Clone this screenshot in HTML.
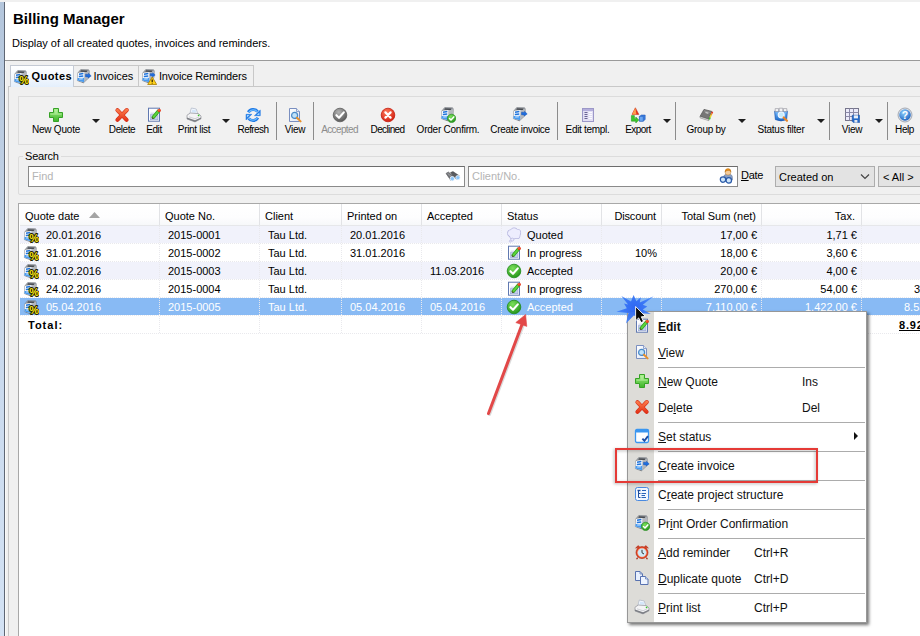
<!DOCTYPE html>
<html>
<head>
<meta charset="utf-8">
<title>Billing Manager</title>
<style>
*{box-sizing:border-box;margin:0;padding:0}
html,body{width:920px;height:636px;overflow:hidden;background:#f0f0f0}
body{position:relative;font-family:"Liberation Sans","DejaVu Sans",sans-serif;font-size:11px;color:#000}
.abs{position:absolute}
.t{position:absolute;white-space:nowrap;line-height:13px;font-size:11px}
.r{text-align:right}
#leftstrip{left:0;top:2px;width:4px;height:634px;background:linear-gradient(#b4c6dc,#c9d9ed 55%,#d3e2f4)}
#leftline{left:4px;top:2px;width:1px;height:634px;background:#5e6674}
#leftwhite{left:5px;top:61px;width:1px;height:575px;background:#fafaf8}
#header{left:5px;top:2px;width:915px;height:58px;background:#fff}
#hline{left:5px;top:60px;width:915px;height:1px;background:#9a9a9a}
#title{left:13px;top:10px;font-size:15px;font-weight:bold;line-height:17px}
#subtitle{left:12px;top:37px;letter-spacing:-.04px}
.tab{position:absolute;top:65px;height:21px;border:1px solid #c8c8c8;border-bottom:none;background:#f0f0f0}
.tab.sel{top:65px;height:22px;background:linear-gradient(#ffffff,#f3f8fe 50%,#e4effc);border-color:#c4cad4;z-index:2}
#pane{left:8px;top:86px;width:920px;height:560px;border:1px solid #c8c8c8;background:#f0f0f0}
#toolbar{left:18px;top:96px;width:920px;height:49px;border:1px solid #dcdcdc;background:#f1f1f1}
.tb{position:absolute;top:124px;font-size:10px;white-space:nowrap;transform:translateX(-50%);line-height:12px;color:#000}
.tb.dis{color:#8c8c8c;text-shadow:none}
.tsep{position:absolute;top:102px;width:1px;height:38px;background:#8c8c8c}
.darr{position:absolute;top:119px;width:0;height:0;border-left:4px solid transparent;border-right:4px solid transparent;border-top:4px solid #1e1e1e}
#sgroup{left:18px;top:156px;width:920px;height:39px;border:1px solid #dcdcdc;border-radius:2px}
.inp{position:absolute;top:166px;height:21px;background:#fff;border:1px solid #8a8a8a;border-top-color:#6c6c6c}
.ph{color:#b4b4b4}
#grid{left:18px;top:203px;width:920px;height:440px;background:#fff;border:1px solid #a8a8a8}
#ghead{left:20px;top:204px;width:900px;height:22px;background:linear-gradient(#ffffff,#fdfdfe 60%,#f6f7f9)}
.hsep{position:absolute;top:204px;width:1px;height:22px;background:#e2e3e6}
.row{position:absolute;left:20px;width:900px;height:18px}
.alt{background:#f1f2fb}
.selrow{background:#88baf4}
.vdot{position:absolute;top:226px;width:1px;height:108px;background-image:linear-gradient(#e9e9ed 50%,transparent 50%);background-size:1px 2px}
.hdot{position:absolute;left:20px;width:900px;height:1px;background-color:#fff;background-image:linear-gradient(90deg,#e9e9ed 50%,transparent 50%);background-size:2px 1px}
.w{color:#fff}
#menu{left:627px;top:311px;width:240px;height:312px;background:#fff;border:1px solid #979797;box-shadow:2px 2px 3px rgba(0,0,0,.55)}
#mstrip{left:628px;top:312px;width:26px;height:310px;background:#dddcd8}
.mi{position:absolute;left:658px;font-size:12px;line-height:14px;white-space:nowrap;color:#111}
.mk{position:absolute;font-size:12px;line-height:14px;white-space:nowrap;color:#111}
.msep{position:absolute;left:658px;width:207px;height:1px;background:#acacac}
u{text-decoration:underline;text-underline-offset:1px}
</style>
</head>
<body>
<svg width="0" height="0" style="position:absolute"><defs>
<linearGradient id="gGreen" x1="0" y1="0" x2="0" y2="1"><stop offset="0" stop-color="#a4ee86"/><stop offset="1" stop-color="#3cb428"/></linearGradient>
<linearGradient id="gRed" x1="0" y1="1" x2="0" y2="15" gradientUnits="userSpaceOnUse"><stop offset="0" stop-color="#ff8452"/><stop offset="1" stop-color="#e02a12"/></linearGradient>
<linearGradient id="gBlue" x1="0" y1="0" x2="0" y2="1"><stop offset="0" stop-color="#7cc0ff"/><stop offset="1" stop-color="#1666c8"/></linearGradient>
<linearGradient id="gGray" x1="0" y1="0" x2="0" y2="1"><stop offset="0" stop-color="#a8a8a8"/><stop offset="1" stop-color="#555"/></linearGradient>
<linearGradient id="gPaper" x1="0" y1="0" x2="1" y2="1"><stop offset="0" stop-color="#ffffff"/><stop offset="1" stop-color="#dfe6f4"/></linearGradient>
<linearGradient id="gReg" x1="0" y1="0" x2="0" y2="1"><stop offset="0" stop-color="#b4b8be"/><stop offset="1" stop-color="#5e636b"/></linearGradient>
<radialGradient id="gHelp" cx="0.4" cy="0.3" r="0.8"><stop offset="0" stop-color="#8fd0ff"/><stop offset="1" stop-color="#1458b8"/></radialGradient>
<radialGradient id="gOk" cx="0.4" cy="0.3" r="0.8"><stop offset="0" stop-color="#7be05a"/><stop offset="1" stop-color="#1c8c14"/></radialGradient>
<radialGradient id="gNo" cx="0.4" cy="0.3" r="0.8"><stop offset="0" stop-color="#ff7a5a"/><stop offset="1" stop-color="#cc1408"/></radialGradient>
<radialGradient id="gGr" cx="0.4" cy="0.3" r="0.8"><stop offset="0" stop-color="#b4b4b4"/><stop offset="1" stop-color="#4c4c4c"/></radialGradient>
</defs></svg>
<div id="leftstrip" class="abs"></div><div id="leftline" class="abs"></div><div id="leftwhite" class="abs"></div>
<div id="header" class="abs"></div><div id="hline" class="abs"></div>
<div id="title" class="t">Billing Manager</div>
<div id="subtitle" class="t">Display of all created quotes, invoices and reminders.</div>
<div id="pane" class="abs"></div>
<div class="tab sel" style="left:10px;width:64px"></div>
<div class="tab" style="left:73px;width:66px"></div>
<div class="tab" style="left:138px;width:116px"></div>
<svg class="abs" style="left:13px;top:70px;z-index:3" width="16" height="16" viewBox="0 0 16 16"><path d="M4.7.6 12.4.8Q13.2 1 13.2 2L13 8.600 7.400 13.800 1.400 11.600 1.800 4z" fill="url(#gReg)" stroke="#6a6e76" stroke-width=".6" stroke-linejoin="round"/><path d="M8.200 3.200 13 2.200 13 8.600 8 13.200z" fill="#b4b8be"/><path d="M5 1.300 11.800 1.500 10.600 3 4.200 2.700z" fill="#45484e"/><path d="M1.800 4 8.400 3 8.100 13.200 1.400 11.500z" fill="#fdfdfe"/><path d="M3 5.200 7.400 4.500M2.800 7.500 7.300 7" stroke="#1f74dc" stroke-width="1.400"/><path d="M1.600 9.100 8.200 8.700 8.100 13.300 1.400 11.600z" fill="#4a9cf0"/><path d="M3.200 10 6.800 9.800" stroke="#e8f2ff" stroke-width=".9"/><g font-family="Liberation Sans,sans-serif" font-weight="bold" font-size="11"><text x="6.200" y="13.900" fill="#241c00" stroke="#241c00" stroke-width="1.900" stroke-linejoin="round">%</text><text x="6.200" y="13.900" fill="#f6e616">%</text></g></svg>
<div class="t" style="left:31.500px;top:70px;font-weight:bold;letter-spacing:.45px;z-index:3">Quotes</div>
<svg class="abs" style="left:76px;top:69px;z-index:3" width="16" height="16" viewBox="0 0 16 16"><path d="M4.7.6 12.4.8Q13.2 1 13.2 2L13 8.600 7.400 13.800 1.400 11.600 1.800 4z" fill="url(#gReg)" stroke="#6a6e76" stroke-width=".6" stroke-linejoin="round"/><path d="M8.200 3.200 13 2.200 13 8.600 8 13.200z" fill="#b4b8be"/><path d="M5 1.300 11.800 1.500 10.600 3 4.200 2.700z" fill="#45484e"/><path d="M1.800 4 8.400 3 8.100 13.200 1.400 11.500z" fill="#fdfdfe"/><path d="M3 5.200 7.400 4.500M2.800 7.500 7.300 7" stroke="#1f74dc" stroke-width="1.400"/><path d="M1.600 9.100 8.200 8.700 8.100 13.300 1.400 11.600z" fill="#4a9cf0"/><path d="M3.200 10 6.800 9.800" stroke="#e8f2ff" stroke-width=".9"/><path d="M9.600 5.200 12.400 5.400 12.500 4.300 15.200 6.900 12.200 9 12.300 7.900 9.500 7.700z" fill="#1f6ee0" stroke="#1452b4" stroke-width=".5" stroke-linejoin="round"/></svg>
<div class="t" style="left:93.5px;top:70px;letter-spacing:-.1px">Invoices</div>
<svg class="abs" style="left:141px;top:69px;z-index:3" width="16" height="16" viewBox="0 0 16 16"><path d="M4.7.6 12.4.8Q13.2 1 13.2 2L13 8.600 7.400 13.800 1.400 11.600 1.800 4z" fill="url(#gReg)" stroke="#6a6e76" stroke-width=".6" stroke-linejoin="round"/><path d="M8.200 3.200 13 2.200 13 8.600 8 13.200z" fill="#b4b8be"/><path d="M5 1.300 11.800 1.500 10.600 3 4.200 2.700z" fill="#45484e"/><path d="M1.800 4 8.400 3 8.100 13.200 1.400 11.500z" fill="#fdfdfe"/><path d="M3 5.200 7.400 4.500M2.800 7.500 7.300 7" stroke="#1f74dc" stroke-width="1.400"/><path d="M1.600 9.100 8.200 8.700 8.100 13.300 1.400 11.600z" fill="#4a9cf0"/><path d="M3.200 10 6.800 9.800" stroke="#e8f2ff" stroke-width=".9"/><path d="M9.200 4.600 11.600 4.800 11.700 3.800 14.200 6 11.500 7.900 11.600 7 9.100 6.800z" fill="#1f6ee0" stroke="#1452b4" stroke-width=".4"/><path d="M11.200 8 15.700 15.500H6.700z" fill="#ffd21a" stroke="#a87c00" stroke-width=".8" stroke-linejoin="round"/><path d="M11.200 10.400v2.600M11.200 13.700v.9" stroke="#221a00" stroke-width="1.200"/></svg>
<div class="t" style="left:159px;top:70px;letter-spacing:-.2px">Invoice Reminders</div>
<div id="toolbar" class="abs"></div>
<svg class="abs" style="left:48px;top:107px;z-index:3" width="16" height="16" viewBox="0 0 16 16"><path d="M5.500 1.500h5v4h4v5h-4v4h-5v-4h-4v-5h4z" fill="url(#gGreen)" stroke="#36a226" stroke-width="1"/><path d="M6.500 2.600h3v4h4v1.200h-4v0h-3v0h-4v-1.200h4z" fill="#c4f6ae" opacity=".55"/></svg>
<div class="tb" style="left:56px;letter-spacing:-0.2px">New Quote</div>
<svg class="abs" style="left:114px;top:107px;z-index:3" width="16" height="16" viewBox="0 0 16 16"><path d="M3.400 3.200 12.600 12.800M12.800 3 3.400 12.800" stroke="#d42a14" stroke-width="4" stroke-linecap="round" fill="none"/><path d="M3.400 3.200 12.600 12.800M12.800 3 3.400 12.800" stroke="url(#gRed)" stroke-width="2.900" stroke-linecap="round" fill="none"/></svg>
<div class="tb" style="left:122px;letter-spacing:-0.43px">Delete</div>
<svg class="abs" style="left:146px;top:107px;z-index:3" width="16" height="16" viewBox="0 0 16 16"><g transform="translate(0,.7)"><rect x="2.500" y=".500" width="11" height="13" fill="#fdfdff" stroke="#6078b0" stroke-width="1"/><rect x="4.500" y="7" width="7.500" height="5" fill="#c4ceec" stroke="#93a2d2" stroke-width=".6"/><path d="M4.500 5.500h4" stroke="#c0c8e4" stroke-width=".8"/><path d="M12.400 3.400 7.200 9.600" stroke="#2c9c1c" stroke-width="3.400" stroke-linecap="round"/><path d="M12.400 3.400 7.200 9.600" stroke="#5cd43c" stroke-width="2" stroke-linecap="round"/><path d="M7.800 10.600 5.900 11.200 6.400 9.200z" fill="#5a3a2a"/><circle cx="13.200" cy="2.700" r="1.700" fill="#e8391c"/><circle cx="12.900" cy="2.300" r=".7" fill="#ff8a5a"/></g></svg>
<div class="tb" style="left:154px;letter-spacing:-0.43px">Edit</div>
<svg class="abs" style="left:186px;top:107px;z-index:3" width="16" height="16" viewBox="0 0 16 16"><path d="M5.400 1 10.200 2 11.800 7 3.800 6.600z" fill="#fbfdff" stroke="#a8b2c4" stroke-width=".7"/><path d="M6.200 2.400 9.600 3.100 10.500 5.800 5.300 5.500z" fill="#d4e6fa"/><path d="M1 8.200 4.400 6 12.600 6.600 15 9 15 11.800 9 14.900 1 12z" fill="#f4f4f6" stroke="#90929a" stroke-width=".7" stroke-linejoin="round"/><path d="M1 10.600 9 13.200 15 10.400 15 11.800 9 14.900 1 12z" fill="#7c7e84"/><path d="M3 9.800 9 11.800 13.400 9.700" fill="none" stroke="#c4c6cc" stroke-width=".8"/><circle cx="12.600" cy="8.300" r=".9" fill="#38c428"/></svg>
<div class="tb" style="left:194px;letter-spacing:-0.31px">Print list</div>
<svg class="abs" style="left:245px;top:107px;z-index:3" width="16" height="16" viewBox="0 0 16 16"><path d="M3.300 5.200A5.600 5.600 0 0 1 12.600 4.600" fill="none" stroke="#1f7ae6" stroke-width="3"/><path d="M15.300 3 15.300 8.700 9.400 8.700z" fill="#1f7ae6" stroke="#1f7ae6" stroke-width=".5" stroke-linejoin="round"/><path d="M12.900 10.800A5.600 5.600 0 0 1 3.600 11.400" fill="none" stroke="#1f7ae6" stroke-width="3"/><path d="M1 13 1 7.300 6.900 7.300z" fill="#1f7ae6" stroke="#1f7ae6" stroke-width=".5" stroke-linejoin="round"/><path d="M3.800 5.200A5.400 5.400 0 0 1 12.200 4.600" fill="none" stroke="#6cbcff" stroke-width="1.100"/><path d="M14.400 5.400 14.400 7.900 11.800 7.900z" fill="#a4d8ff"/><path d="M12.400 10.800A5.400 5.400 0 0 1 4 11.400" fill="none" stroke="#6cbcff" stroke-width="1.100"/><path d="M1.900 10.600 1.900 8.100 4.500 8.100z" fill="#a4d8ff"/></svg>
<div class="tb" style="left:253px;letter-spacing:-0.57px">Refresh</div>
<svg class="abs" style="left:287px;top:107px;z-index:3" width="16" height="16" viewBox="0 0 16 16"><path d="M2.5 1.5h7l3 3v10h-10z" fill="url(#gPaper)" stroke="#7a8fc0"/><path d="M9.5 1.5v3h3" fill="#e4ebf8" stroke="#7a8fc0" stroke-width=".8"/><circle cx="7.6" cy="8.4" r="3" fill="#bfe2fa" stroke="#4a8ac8" stroke-width="1.2"/><path d="M10 10.8 13.6 14.4" stroke="#e8902a" stroke-width="2" stroke-linecap="round"/></svg>
<div class="tb" style="left:295px;letter-spacing:-0.25px">View</div>
<svg class="abs" style="left:332px;top:107px;z-index:3" width="16" height="16" viewBox="0 0 16 16"><circle cx="8" cy="8" r="6.8" fill="url(#gGr)" stroke="#5c5c5c" stroke-width=".8"/><path d="M4.4 8.2 7 10.8 11.8 5.4" fill="none" stroke="#fff" stroke-width="2.1" stroke-linecap="round" stroke-linejoin="round"/></svg>
<div class="tb dis" style="left:339.5px;letter-spacing:-0.63px">Accepted</div>
<svg class="abs" style="left:380px;top:107px;z-index:3" width="16" height="16" viewBox="0 0 16 16"><circle cx="8" cy="8" r="6.8" fill="url(#gNo)" stroke="#c41a0c" stroke-width=".8"/><path d="M5.4 5.4 10.6 10.6M10.6 5.4 5.4 10.6" stroke="#fff" stroke-width="2.2" stroke-linecap="round"/></svg>
<div class="tb" style="left:387.5px;letter-spacing:-0.62px">Declined</div>
<svg class="abs" style="left:440px;top:107px;z-index:3" width="16" height="16" viewBox="0 0 16 16"><path d="M4.7.6 12.4.8Q13.2 1 13.2 2L13 8.600 7.400 13.800 1.400 11.600 1.800 4z" fill="url(#gReg)" stroke="#6a6e76" stroke-width=".6" stroke-linejoin="round"/><path d="M8.200 3.200 13 2.200 13 8.600 8 13.200z" fill="#b4b8be"/><path d="M5 1.300 11.800 1.500 10.600 3 4.200 2.700z" fill="#45484e"/><path d="M1.800 4 8.400 3 8.100 13.200 1.400 11.500z" fill="#fdfdfe"/><path d="M3 5.200 7.400 4.500M2.800 7.500 7.300 7" stroke="#1f74dc" stroke-width="1.400"/><path d="M1.600 9.100 8.200 8.700 8.100 13.300 1.400 11.600z" fill="#4a9cf0"/><path d="M3.200 10 6.800 9.800" stroke="#e8f2ff" stroke-width=".9"/><circle cx="11.600" cy="11.400" r="4.200" fill="url(#gOk)" stroke="#1e8a18" stroke-width=".6"/><path d="M9.500 11.500 11 13 13.800 9.900" fill="none" stroke="#fff" stroke-width="1.500" stroke-linecap="round" stroke-linejoin="round"/></svg>
<div class="tb" style="left:448px;letter-spacing:-0.24px">Order Confirm.</div>
<svg class="abs" style="left:512px;top:107px;z-index:3" width="16" height="16" viewBox="0 0 16 16"><path d="M4.7.6 12.4.8Q13.2 1 13.2 2L13 8.600 7.400 13.800 1.400 11.600 1.800 4z" fill="url(#gReg)" stroke="#6a6e76" stroke-width=".6" stroke-linejoin="round"/><path d="M8.200 3.200 13 2.200 13 8.600 8 13.200z" fill="#b4b8be"/><path d="M5 1.300 11.800 1.500 10.600 3 4.200 2.700z" fill="#45484e"/><path d="M1.800 4 8.400 3 8.100 13.200 1.400 11.500z" fill="#fdfdfe"/><path d="M3 5.200 7.400 4.500M2.800 7.500 7.300 7" stroke="#1f74dc" stroke-width="1.400"/><path d="M1.600 9.100 8.200 8.700 8.100 13.300 1.400 11.600z" fill="#4a9cf0"/><path d="M3.200 10 6.800 9.800" stroke="#e8f2ff" stroke-width=".9"/><path d="M9.600 5.200 12.400 5.400 12.500 4.300 15.200 6.900 12.200 9 12.300 7.900 9.500 7.700z" fill="#1f6ee0" stroke="#1452b4" stroke-width=".5" stroke-linejoin="round"/></svg>
<div class="tb" style="left:520px;letter-spacing:-0.32px">Create invoice</div>
<svg class="abs" style="left:580px;top:107px;z-index:3" width="16" height="16" viewBox="0 0 16 16"><rect x="2.500" y="1.500" width="11" height="13" fill="#e2dff4" stroke="#9c98c8"/><rect x="3" y="2" width="10" height="2" fill="#b4aedc"/><path d="M4.500 5.500h3M4.500 7.500h3M4.500 9.500h3M4.500 11.500h3" stroke="#6a6494" stroke-width="1"/><path d="M8.500 5.500h3.500M8.500 7.500h3.500M8.500 9.500h3.500M8.500 11.500h3.500" stroke="#fbfbff" stroke-width="1.200"/></svg>
<div class="tb" style="left:587.5px;letter-spacing:-0.3px">Edit templ.</div>
<svg class="abs" style="left:630px;top:107px;z-index:3" width="16" height="16" viewBox="0 0 16 16"><path d="M5.4.8 8.8 7.4H2z" fill="#e8321c" stroke="#b41a0a" stroke-width=".5"/><path d="M5.4.8 6.4 7.4H2z" fill="#ff9a4a"/><path d="M1.4 8.6h3v3.2h1.4V10l3 3-3 3v-1.8H1.4z" fill="#3cc82c" stroke="#1c8a14" stroke-width=".5"/><path d="M9.4 9.4 11.4 8h3.8v4.6l-2 1.6H9.4z" fill="#3a7ee0" stroke="#1c52b0" stroke-width=".5"/><path d="M9.4 9.4h3.8V14.2H9.4z" fill="#6aa6f2" stroke="#1c52b0" stroke-width=".4"/></svg>
<div class="tb" style="left:638px;letter-spacing:-0.57px">Export</div>
<svg class="abs" style="left:698px;top:107px;z-index:3" width="16" height="16" viewBox="0 0 16 16"><path d="M6 2.400 13.800 4.400 10.600 12.200 2 9.400z" fill="#767676" stroke="#4c4c4c" stroke-width=".7" stroke-linejoin="round"/><path d="M6.200 3.200 12.800 4.900 12.300 6.100 5.700 4.400z" fill="#8e8e8e"/><path d="M2 9.400 10.600 12.200 10.900 13.700 2.100 10.900z" fill="#e2e2e2" stroke="#6e6e6e" stroke-width=".5"/><path d="M7.600 4.800 10.600 5.600 10.200 6.900 7.200 6.100z" fill="#c4c4c4"/><path d="M13.800 4.400 15.200 5 14.400 6.900 13 6.350z" fill="#e8301c"/><path d="M13 6.350 14.400 6.900 13.600 8.850 12.200 8.300z" fill="#f0a01c"/><path d="M12.200 8.300 13.600 8.850 12.800 10.800 11.400 10.250z" fill="#eed81c"/><path d="M11.400 10.250 12.800 10.800 12 12.750 10.600 12.200z" fill="#3cbc2c"/></svg>
<div class="tb" style="left:706px;letter-spacing:-0.29px">Group by</div>
<svg class="abs" style="left:773px;top:107px;z-index:3" width="16" height="16" viewBox="0 0 16 16"><path d="M1.6 4.2h12.8l-.8 8.4q-5.6 2.6-11.2 0z" fill="url(#gBlue)" stroke="#1452b0" stroke-width=".7"/><path d="M2.2 1.6h3.4v3H2.2zM6.2 1.2h3.6v3.4H6.2zM10.4 1.6h3.4v3h-3.4z" fill="#f4f4f6" stroke="#8e8e98" stroke-width=".6"/><circle cx="8.2" cy="8" r="3" fill="#c8ecfc" stroke="#f4f8ff" stroke-width="1.1"/><path d="M10.6 10.4 14 13.8" stroke="#e8862a" stroke-width="2.1" stroke-linecap="round"/></svg>
<div class="tb" style="left:781px;letter-spacing:-0.23px">Status filter</div>
<svg class="abs" style="left:844px;top:107px;z-index:3" width="16" height="16" viewBox="0 0 16 16"><rect x="1.5" y="1.5" width="13" height="12" fill="#ecebfa" stroke="#77768c"/><path d="M1.5 5.5h13M1.5 9.5h13M5.5 1.5v12M9.5 1.5v12" stroke="#8c8aa8" stroke-width="1"/><path d="M8.2 8.2h7.4v7.4H9.4L8.2 14.4z" fill="#2468c8" stroke="#144a9c" stroke-width=".5"/><rect x="9.8" y="8.4" width="4.2" height="3" fill="#e8eef8"/><rect x="10.4" y="13" width="3" height="2.6" fill="#e0e4ec"/></svg>
<div class="tb" style="left:852px;letter-spacing:-0.25px">View</div>
<svg class="abs" style="left:897px;top:107px;z-index:3" width="16" height="16" viewBox="0 0 16 16"><circle cx="8" cy="8" r="7" fill="#e4e6ea" stroke="#9298a4" stroke-width=".8"/><circle cx="8" cy="8" r="5.8" fill="url(#gHelp)"/><text x="8" y="12" text-anchor="middle" font-family="Liberation Sans,sans-serif" font-weight="bold" font-size="10.5" fill="#fff">?</text></svg>
<div class="tb" style="left:904.5px;letter-spacing:-0.44px">Help</div>
<div class="tsep" style="left:276px"></div>
<div class="tsep" style="left:313px"></div>
<div class="tsep" style="left:557px"></div>
<div class="tsep" style="left:675px"></div>
<div class="tsep" style="left:829px"></div>
<div class="tsep" style="left:887px"></div>
<div class="darr" style="left:92px"></div>
<div class="darr" style="left:222px"></div>
<div class="darr" style="left:663px"></div>
<div class="darr" style="left:738px"></div>
<div class="darr" style="left:817px"></div>
<div class="darr" style="left:875px"></div>
<div id="sgroup" class="abs"></div>
<div class="t" style="left:23px;top:150px;background:#f0f0f0;padding:0 2px;letter-spacing:-.2px">Search</div>
<div class="inp" style="left:28px;width:437px"></div><div class="t ph" style="left:32px;top:170px">Find</div>
<svg class="abs" style="left:445px;top:169px;z-index:3" width="16" height="16" viewBox="0 0 16 16"><path d="M5.500 3.600 8 2.600 14.600 7 11.600 10.600 8.400 7.600z" fill="#5a5c60" stroke="#3e4044" stroke-width=".5" stroke-linejoin="round"/><path d="M1 4.400 3.400 3 9.200 8 5.800 11.400z" fill="#74767a" stroke="#4a4c50" stroke-width=".5" stroke-linejoin="round"/><path d="M2.600 4.400 7.600 8.600" stroke="#a4a6aa" stroke-width=".9"/><circle cx="7.300" cy="9.700" r="2.200" fill="#8cc6fa" stroke="#f4f8fc" stroke-width=".8"/><circle cx="12.900" cy="8.700" r="2.200" fill="#8cc6fa" stroke="#f4f8fc" stroke-width=".8"/></svg>
<div class="inp" style="left:468px;width:270px"></div><div class="t ph" style="left:472px;top:170px">Client/No.</div>
<svg class="abs" style="left:718px;top:168px;z-index:3" width="16" height="16" viewBox="0 0 16 16"><path d="M5.600 9.500q0-3.400 4.400-3.400t4.400 3.400v2.500h-8.800z" fill="#8aa0c4" stroke="#5a6c90" stroke-width=".5"/><circle cx="10" cy="4.200" r="2.900" fill="#f4cc9c" stroke="#b08040" stroke-width=".5"/><path d="M7 3.800q.2-3.200 3-3.200t3 3.200q-1.400-1.600-3-1.400t-3 1.400z" fill="#e8901c" stroke="#b46a0c" stroke-width=".4"/><circle cx="5" cy="11.600" r="2.700" fill="#cfe6fa" stroke="#2a5aa8" stroke-width="1.200"/><circle cx="10.800" cy="12.400" r="2.700" fill="#cfe6fa" stroke="#2a5aa8" stroke-width="1.200"/><path d="M7.200 11.400h1.400" stroke="#2a5aa8" stroke-width="1.400"/></svg>
<div class="t" style="left:741px;top:169px;letter-spacing:-.3px"><u>D</u>ate</div>
<div class="abs" style="left:775px;top:166px;width:100px;height:21px;background:#e3e3e3;border:1px solid #adadad"></div>
<div class="t" style="left:779px;top:171px">Created on</div>
<svg class="abs" style="left:860px;top:173px" width="10" height="7" viewBox="0 0 10 7"><path d="M1 1.500 5 5.500 9 1.500" fill="none" stroke="#444" stroke-width="1.200"/></svg>
<div class="abs" style="left:878px;top:166px;width:60px;height:21px;background:#e3e3e3;border:1px solid #adadad"></div>
<div class="t" style="left:883px;top:171px">&lt; All &gt;</div>
<div id="grid" class="abs"></div><div id="ghead" class="abs"></div>
<div class="hsep" style="left:159px"></div>
<div class="hsep" style="left:259px"></div>
<div class="hsep" style="left:341px"></div>
<div class="hsep" style="left:421px"></div>
<div class="hsep" style="left:501px"></div>
<div class="hsep" style="left:601px"></div>
<div class="hsep" style="left:661px"></div>
<div class="hsep" style="left:761px"></div>
<div class="hsep" style="left:861px"></div>
<div class="abs" style="left:20px;top:225px;width:900px;height:1px;background:#e6e7ea"></div>
<div class="t" style="left:25px;top:210px">Quote date</div>
<div class="t" style="left:165px;top:210px">Quote No.</div>
<div class="t" style="left:265px;top:210px">Client</div>
<div class="t" style="left:347px;top:210px">Printed on</div>
<div class="t" style="left:427px;top:210px">Accepted</div>
<div class="t" style="left:507px;top:210px">Status</div>
<div class="t r" style="left:602px;width:54px;top:210px;letter-spacing:-.15px">Discount</div>
<div class="t r" style="left:662px;width:94px;top:210px">Total Sum (net)</div>
<div class="t r" style="left:762px;width:93px;top:210px">Tax.</div>
<svg class="abs" style="left:89px;top:212px" width="11" height="6" viewBox="0 0 11 6"><path d="M0 6 5.500 0 11 6z" fill="#a4a4a4"/></svg>
<div class="row alt" style="top:226px"></div>
<div class="row" style="top:244px"></div>
<div class="row alt" style="top:262px"></div>
<div class="row" style="top:280px"></div>
<div class="row alt selrow" style="top:298px"></div>
<div class="hdot" style="top:243px"></div>
<div class="hdot" style="top:261px"></div>
<div class="hdot" style="top:279px"></div>
<div class="hdot" style="top:297px"></div>
<div class="hdot" style="top:315px"></div>
<div class="hdot" style="top:333px"></div>
<div class="vdot" style="left:159px"></div>
<div class="vdot" style="left:259px"></div>
<div class="vdot" style="left:341px"></div>
<div class="vdot" style="left:421px"></div>
<div class="vdot" style="left:501px"></div>
<div class="vdot" style="left:601px"></div>
<div class="vdot" style="left:661px"></div>
<div class="vdot" style="left:761px"></div>
<div class="vdot" style="left:861px"></div>
<svg class="abs" style="left:23px;top:228px;z-index:3" width="16" height="16" viewBox="0 0 16 16"><path d="M4.7.6 12.4.8Q13.2 1 13.2 2L13 8.600 7.400 13.800 1.400 11.600 1.800 4z" fill="url(#gReg)" stroke="#6a6e76" stroke-width=".6" stroke-linejoin="round"/><path d="M8.200 3.200 13 2.200 13 8.600 8 13.200z" fill="#b4b8be"/><path d="M5 1.300 11.800 1.500 10.600 3 4.200 2.700z" fill="#45484e"/><path d="M1.800 4 8.400 3 8.100 13.200 1.400 11.500z" fill="#fdfdfe"/><path d="M3 5.200 7.400 4.500M2.800 7.500 7.300 7" stroke="#1f74dc" stroke-width="1.400"/><path d="M1.600 9.100 8.200 8.700 8.100 13.300 1.400 11.600z" fill="#4a9cf0"/><path d="M3.200 10 6.800 9.800" stroke="#e8f2ff" stroke-width=".9"/><g font-family="Liberation Sans,sans-serif" font-weight="bold" font-size="11"><text x="6.200" y="13.900" fill="#241c00" stroke="#241c00" stroke-width="1.900" stroke-linejoin="round">%</text><text x="6.200" y="13.900" fill="#f6e616">%</text></g></svg>
<div class="t" style="left:46px;top:229px">20.01.2016</div>
<div class="t" style="left:168px;top:229px">2015-0001</div>
<div class="t" style="left:268px;top:229px">Tau Ltd.</div>
<div class="t" style="left:350px;top:229px">20.01.2016</div>
<svg class="abs" style="left:506px;top:227px;z-index:3" width="16" height="16" viewBox="0 0 16 16"><circle cx="5" cy="6.2" r="3.1" fill="#ebebfd" stroke="#b4b4de" stroke-width="1.400"/><circle cx="8" cy="4.4" r="3.2" fill="#ebebfd" stroke="#b4b4de" stroke-width="1.400"/><circle cx="11.4" cy="5.6" r="3" fill="#ebebfd" stroke="#b4b4de" stroke-width="1.400"/><circle cx="10.8" cy="8.4" r="2.9" fill="#ebebfd" stroke="#b4b4de" stroke-width="1.400"/><circle cx="7" cy="8.8" r="3" fill="#ebebfd" stroke="#b4b4de" stroke-width="1.400"/><circle cx="5" cy="6.2" r="3.1" fill="#ededfe"/><circle cx="8" cy="4.4" r="3.2" fill="#ededfe"/><circle cx="11.4" cy="5.6" r="3" fill="#ededfe"/><circle cx="10.8" cy="8.4" r="2.9" fill="#ededfe"/><circle cx="7" cy="8.8" r="3" fill="#ededfe"/><circle cx="6.300" cy="12.600" r="1.500" fill="#ebebfd" stroke="#b4b4de" stroke-width=".7"/><circle cx="4.300" cy="14.200" r="1" fill="#ebebfd" stroke="#b4b4de" stroke-width=".6"/></svg>
<div class="t" style="left:527px;top:229px">Quoted</div>
<div class="t r" style="left:662px;width:95px;top:229px">17,00 €</div>
<div class="t r" style="left:762px;width:95px;top:229px">1,71 €</div>
<svg class="abs" style="left:23px;top:246px;z-index:3" width="16" height="16" viewBox="0 0 16 16"><path d="M4.7.6 12.4.8Q13.2 1 13.2 2L13 8.600 7.400 13.800 1.400 11.600 1.800 4z" fill="url(#gReg)" stroke="#6a6e76" stroke-width=".6" stroke-linejoin="round"/><path d="M8.200 3.200 13 2.200 13 8.600 8 13.200z" fill="#b4b8be"/><path d="M5 1.300 11.800 1.500 10.600 3 4.200 2.700z" fill="#45484e"/><path d="M1.800 4 8.400 3 8.100 13.200 1.400 11.500z" fill="#fdfdfe"/><path d="M3 5.200 7.400 4.500M2.800 7.500 7.300 7" stroke="#1f74dc" stroke-width="1.400"/><path d="M1.600 9.100 8.200 8.700 8.100 13.300 1.400 11.600z" fill="#4a9cf0"/><path d="M3.200 10 6.800 9.800" stroke="#e8f2ff" stroke-width=".9"/><g font-family="Liberation Sans,sans-serif" font-weight="bold" font-size="11"><text x="6.200" y="13.900" fill="#241c00" stroke="#241c00" stroke-width="1.900" stroke-linejoin="round">%</text><text x="6.200" y="13.900" fill="#f6e616">%</text></g></svg>
<div class="t" style="left:46px;top:247px">31.01.2016</div>
<div class="t" style="left:168px;top:247px">2015-0002</div>
<div class="t" style="left:268px;top:247px">Tau Ltd.</div>
<div class="t" style="left:350px;top:247px">31.01.2016</div>
<svg class="abs" style="left:506px;top:245px;z-index:3" width="16" height="16" viewBox="0 0 16 16"><g transform="translate(0,.7)"><rect x="2.500" y=".500" width="11" height="13" fill="#fdfdff" stroke="#6078b0" stroke-width="1"/><rect x="4.500" y="7" width="7.500" height="5" fill="#c4ceec" stroke="#93a2d2" stroke-width=".6"/><path d="M4.500 5.500h4" stroke="#c0c8e4" stroke-width=".8"/><path d="M12.400 3.400 7.200 9.600" stroke="#2c9c1c" stroke-width="3.400" stroke-linecap="round"/><path d="M12.400 3.400 7.200 9.600" stroke="#5cd43c" stroke-width="2" stroke-linecap="round"/><path d="M7.800 10.600 5.900 11.200 6.400 9.200z" fill="#5a3a2a"/><circle cx="13.200" cy="2.700" r="1.700" fill="#e8391c"/><circle cx="12.900" cy="2.300" r=".7" fill="#ff8a5a"/></g></svg>
<div class="t" style="left:527px;top:247px">In progress</div>
<div class="t r" style="left:602px;width:55px;top:247px">10%</div>
<div class="t r" style="left:662px;width:95px;top:247px">18,00 €</div>
<div class="t r" style="left:762px;width:95px;top:247px">3,60 €</div>
<svg class="abs" style="left:23px;top:264px;z-index:3" width="16" height="16" viewBox="0 0 16 16"><path d="M4.7.6 12.4.8Q13.2 1 13.2 2L13 8.600 7.400 13.800 1.400 11.600 1.800 4z" fill="url(#gReg)" stroke="#6a6e76" stroke-width=".6" stroke-linejoin="round"/><path d="M8.200 3.200 13 2.200 13 8.600 8 13.200z" fill="#b4b8be"/><path d="M5 1.300 11.800 1.500 10.600 3 4.200 2.700z" fill="#45484e"/><path d="M1.800 4 8.400 3 8.100 13.200 1.400 11.500z" fill="#fdfdfe"/><path d="M3 5.200 7.400 4.500M2.800 7.500 7.300 7" stroke="#1f74dc" stroke-width="1.400"/><path d="M1.600 9.100 8.200 8.700 8.100 13.300 1.400 11.600z" fill="#4a9cf0"/><path d="M3.200 10 6.800 9.800" stroke="#e8f2ff" stroke-width=".9"/><g font-family="Liberation Sans,sans-serif" font-weight="bold" font-size="11"><text x="6.200" y="13.900" fill="#241c00" stroke="#241c00" stroke-width="1.900" stroke-linejoin="round">%</text><text x="6.200" y="13.900" fill="#f6e616">%</text></g></svg>
<div class="t" style="left:46px;top:265px">01.02.2016</div>
<div class="t" style="left:168px;top:265px">2015-0003</div>
<div class="t" style="left:268px;top:265px">Tau Ltd.</div>
<div class="t" style="left:430px;top:265px">11.03.2016</div>
<svg class="abs" style="left:506px;top:263px;z-index:3" width="16" height="16" viewBox="0 0 16 16"><circle cx="8" cy="8" r="6.8" fill="url(#gOk)" stroke="#1e8a18" stroke-width=".8"/><path d="M4.4 8.2 7 10.8 11.8 5.4" fill="none" stroke="#fff" stroke-width="2.1" stroke-linecap="round" stroke-linejoin="round"/></svg>
<div class="t" style="left:527px;top:265px">Accepted</div>
<div class="t r" style="left:662px;width:95px;top:265px">20,00 €</div>
<div class="t r" style="left:762px;width:95px;top:265px">4,00 €</div>
<svg class="abs" style="left:23px;top:282px;z-index:3" width="16" height="16" viewBox="0 0 16 16"><path d="M4.7.6 12.4.8Q13.2 1 13.2 2L13 8.600 7.400 13.800 1.400 11.600 1.800 4z" fill="url(#gReg)" stroke="#6a6e76" stroke-width=".6" stroke-linejoin="round"/><path d="M8.200 3.200 13 2.200 13 8.600 8 13.200z" fill="#b4b8be"/><path d="M5 1.300 11.800 1.500 10.600 3 4.200 2.700z" fill="#45484e"/><path d="M1.800 4 8.400 3 8.100 13.200 1.400 11.500z" fill="#fdfdfe"/><path d="M3 5.200 7.400 4.500M2.800 7.500 7.300 7" stroke="#1f74dc" stroke-width="1.400"/><path d="M1.600 9.100 8.200 8.700 8.100 13.300 1.400 11.600z" fill="#4a9cf0"/><path d="M3.200 10 6.800 9.800" stroke="#e8f2ff" stroke-width=".9"/><g font-family="Liberation Sans,sans-serif" font-weight="bold" font-size="11"><text x="6.200" y="13.900" fill="#241c00" stroke="#241c00" stroke-width="1.900" stroke-linejoin="round">%</text><text x="6.200" y="13.900" fill="#f6e616">%</text></g></svg>
<div class="t" style="left:46px;top:283px">24.02.2016</div>
<div class="t" style="left:168px;top:283px">2015-0004</div>
<div class="t" style="left:268px;top:283px">Tau Ltd.</div>
<svg class="abs" style="left:506px;top:281px;z-index:3" width="16" height="16" viewBox="0 0 16 16"><g transform="translate(0,.7)"><rect x="2.500" y=".500" width="11" height="13" fill="#fdfdff" stroke="#6078b0" stroke-width="1"/><rect x="4.500" y="7" width="7.500" height="5" fill="#c4ceec" stroke="#93a2d2" stroke-width=".6"/><path d="M4.500 5.500h4" stroke="#c0c8e4" stroke-width=".8"/><path d="M12.400 3.400 7.200 9.600" stroke="#2c9c1c" stroke-width="3.400" stroke-linecap="round"/><path d="M12.400 3.400 7.200 9.600" stroke="#5cd43c" stroke-width="2" stroke-linecap="round"/><path d="M7.800 10.600 5.900 11.200 6.400 9.200z" fill="#5a3a2a"/><circle cx="13.200" cy="2.700" r="1.700" fill="#e8391c"/><circle cx="12.900" cy="2.300" r=".7" fill="#ff8a5a"/></g></svg>
<div class="t" style="left:527px;top:283px">In progress</div>
<div class="t r" style="left:662px;width:95px;top:283px">270,00 €</div>
<div class="t r" style="left:762px;width:95px;top:283px">54,00 €</div>
<div class="t" style="left:914px;top:283px">324,00 €</div>
<svg class="abs" style="left:23px;top:300px;z-index:3" width="16" height="16" viewBox="0 0 16 16"><path d="M4.7.6 12.4.8Q13.2 1 13.2 2L13 8.600 7.400 13.800 1.400 11.600 1.800 4z" fill="url(#gReg)" stroke="#6a6e76" stroke-width=".6" stroke-linejoin="round"/><path d="M8.200 3.200 13 2.200 13 8.600 8 13.200z" fill="#b4b8be"/><path d="M5 1.300 11.800 1.500 10.600 3 4.200 2.700z" fill="#45484e"/><path d="M1.800 4 8.400 3 8.100 13.200 1.400 11.500z" fill="#fdfdfe"/><path d="M3 5.200 7.400 4.500M2.800 7.500 7.300 7" stroke="#1f74dc" stroke-width="1.400"/><path d="M1.600 9.100 8.200 8.700 8.100 13.300 1.400 11.600z" fill="#4a9cf0"/><path d="M3.200 10 6.800 9.800" stroke="#e8f2ff" stroke-width=".9"/><g font-family="Liberation Sans,sans-serif" font-weight="bold" font-size="11"><text x="6.200" y="13.900" fill="#241c00" stroke="#241c00" stroke-width="1.900" stroke-linejoin="round">%</text><text x="6.200" y="13.900" fill="#f6e616">%</text></g></svg>
<div class="t w" style="left:46px;top:301px">05.04.2016</div>
<div class="t w" style="left:168px;top:301px">2015-0005</div>
<div class="t w" style="left:268px;top:301px">Tau Ltd.</div>
<div class="t w" style="left:350px;top:301px">05.04.2016</div>
<div class="t w" style="left:430px;top:301px">05.04.2016</div>
<svg class="abs" style="left:506px;top:299px;z-index:3" width="16" height="16" viewBox="0 0 16 16"><circle cx="8" cy="8" r="6.8" fill="url(#gOk)" stroke="#1e8a18" stroke-width=".8"/><path d="M4.4 8.2 7 10.8 11.8 5.4" fill="none" stroke="#fff" stroke-width="2.1" stroke-linecap="round" stroke-linejoin="round"/></svg>
<div class="t w" style="left:527px;top:301px">Accepted</div>
<div class="t r w" style="left:662px;width:95px;top:301px">7.110,00 €</div>
<div class="t r w" style="left:762px;width:95px;top:301px">1.422,00 €</div>
<div class="t w" style="left:904px;top:301px">8.532,00 €</div>
<div class="t" style="left:28px;top:319px;font-weight:bold;letter-spacing:1px">Total:</div>
<div class="t" style="left:899px;top:319px;font-weight:bold;letter-spacing:.8px;text-decoration:underline">8.926,31 €</div>
<svg class="abs" style="left:470px;top:305px" width="80" height="120" viewBox="470 305 80 120"><path d="M489.500 414.500 523 326" stroke="#b8b8b8" stroke-width="3" fill="none" stroke-linecap="round" opacity=".5"/><path d="M488.500 413.500 522 324.500" stroke="#e24848" stroke-width="3" fill="none" stroke-linecap="round"/><path d="M525.600 314.500 515.800 322.600 526.800 326.400z" fill="#e24848" stroke="#e24848" stroke-width=".6" stroke-linejoin="round"/></svg>
<div id="menu" class="abs"></div><div id="mstrip" class="abs"></div>
<svg class="abs" style="left:634px;top:318px;z-index:3" width="16" height="16" viewBox="0 0 16 16"><g transform="translate(0,.7)"><rect x="2.500" y=".500" width="11" height="13" fill="#fdfdff" stroke="#6078b0" stroke-width="1"/><rect x="4.500" y="7" width="7.500" height="5" fill="#c4ceec" stroke="#93a2d2" stroke-width=".6"/><path d="M4.500 5.500h4" stroke="#c0c8e4" stroke-width=".8"/><path d="M12.400 3.400 7.200 9.600" stroke="#2c9c1c" stroke-width="3.400" stroke-linecap="round"/><path d="M12.400 3.400 7.200 9.600" stroke="#5cd43c" stroke-width="2" stroke-linecap="round"/><path d="M7.800 10.600 5.900 11.200 6.400 9.200z" fill="#5a3a2a"/><circle cx="13.200" cy="2.700" r="1.700" fill="#e8391c"/><circle cx="12.900" cy="2.300" r=".7" fill="#ff8a5a"/></g></svg>
<div class="mi" style="top:320px"><b><u>E</u>dit</b></div>
<svg class="abs" style="left:634px;top:344px;z-index:3" width="16" height="16" viewBox="0 0 16 16"><path d="M2.5 1.5h7l3 3v10h-10z" fill="url(#gPaper)" stroke="#7a8fc0"/><path d="M9.5 1.5v3h3" fill="#e4ebf8" stroke="#7a8fc0" stroke-width=".8"/><circle cx="7.6" cy="8.4" r="3" fill="#bfe2fa" stroke="#4a8ac8" stroke-width="1.2"/><path d="M10 10.8 13.6 14.4" stroke="#e8902a" stroke-width="2" stroke-linecap="round"/></svg>
<div class="mi" style="top:346px"><u>V</u>iew</div>
<svg class="abs" style="left:634px;top:373px;z-index:3" width="16" height="16" viewBox="0 0 16 16"><path d="M5.500 1.500h5v4h4v5h-4v4h-5v-4h-4v-5h4z" fill="url(#gGreen)" stroke="#36a226" stroke-width="1"/><path d="M6.500 2.600h3v4h4v1.200h-4v0h-3v0h-4v-1.200h4z" fill="#c4f6ae" opacity=".55"/></svg>
<div class="mi" style="top:375px"><u>N</u>ew Quote</div>
<div class="mk" style="left:802px;top:375px">Ins</div>
<svg class="abs" style="left:634px;top:399px;z-index:3" width="16" height="16" viewBox="0 0 16 16"><path d="M3.400 3.200 12.600 12.800M12.800 3 3.400 12.800" stroke="#d42a14" stroke-width="4" stroke-linecap="round" fill="none"/><path d="M3.400 3.200 12.600 12.800M12.800 3 3.400 12.800" stroke="url(#gRed)" stroke-width="2.900" stroke-linecap="round" fill="none"/></svg>
<div class="mi" style="top:401px">De<u>l</u>ete</div>
<div class="mk" style="left:802px;top:401px">Del</div>
<svg class="abs" style="left:634px;top:428px;z-index:3" width="16" height="16" viewBox="0 0 16 16"><rect x="1.500" y="1.500" width="13" height="13" rx="1.400" fill="#fdfeff" stroke="#3a96f0" stroke-width="1.300"/><rect x="1.500" y="1.500" width="13" height="3" rx="1" fill="#3a96f0"/><path d="M8.400 10.600 10.400 12.800 14 8.200" fill="none" stroke="#1c4ca4" stroke-width="1.900"/></svg>
<div class="mi" style="top:430px"><u>S</u>et status</div>
<svg class="abs" style="left:634px;top:457px;z-index:3" width="16" height="16" viewBox="0 0 16 16"><path d="M4.7.6 12.4.8Q13.2 1 13.2 2L13 8.600 7.400 13.800 1.400 11.600 1.800 4z" fill="url(#gReg)" stroke="#6a6e76" stroke-width=".6" stroke-linejoin="round"/><path d="M8.200 3.200 13 2.200 13 8.600 8 13.200z" fill="#b4b8be"/><path d="M5 1.300 11.800 1.500 10.600 3 4.200 2.700z" fill="#45484e"/><path d="M1.800 4 8.400 3 8.100 13.200 1.400 11.500z" fill="#fdfdfe"/><path d="M3 5.200 7.400 4.500M2.800 7.500 7.300 7" stroke="#1f74dc" stroke-width="1.400"/><path d="M1.600 9.100 8.200 8.700 8.100 13.300 1.400 11.600z" fill="#4a9cf0"/><path d="M3.200 10 6.800 9.800" stroke="#e8f2ff" stroke-width=".9"/><path d="M9.600 5.200 12.400 5.400 12.500 4.300 15.200 6.900 12.200 9 12.300 7.900 9.500 7.700z" fill="#1f6ee0" stroke="#1452b4" stroke-width=".5" stroke-linejoin="round"/></svg>
<div class="mi" style="top:459px"><u>C</u>reate invoice</div>
<svg class="abs" style="left:634px;top:486px;z-index:3" width="16" height="16" viewBox="0 0 16 16"><rect x="1.500" y="1.500" width="13" height="13" rx="2" fill="#f2f7ff" stroke="#4a8ae0" stroke-width="1"/><path d="M4.500 4v7.500M4.500 7.500h2M4.500 11.500h2" stroke="#1c4c9c" stroke-width="1" fill="none"/><path d="M3.500 4.500h3" stroke="#1c4c9c" stroke-width="1.400"/><path d="M7.500 7.500h4.500M7.500 9.500h3.500M7.500 11.500h4.500M8 4.500h4" stroke="#2a64b8" stroke-width="1.100"/></svg>
<div class="mi" style="top:488px">C<u>r</u>eate project structure</div>
<svg class="abs" style="left:634px;top:515px;z-index:3" width="16" height="16" viewBox="0 0 16 16"><path d="M4.7.6 12.4.8Q13.2 1 13.2 2L13 8.600 7.400 13.800 1.400 11.600 1.800 4z" fill="url(#gReg)" stroke="#6a6e76" stroke-width=".6" stroke-linejoin="round"/><path d="M8.200 3.200 13 2.200 13 8.600 8 13.200z" fill="#b4b8be"/><path d="M5 1.300 11.800 1.500 10.600 3 4.200 2.700z" fill="#45484e"/><path d="M1.800 4 8.400 3 8.100 13.200 1.400 11.500z" fill="#fdfdfe"/><path d="M3 5.200 7.400 4.500M2.800 7.500 7.300 7" stroke="#1f74dc" stroke-width="1.400"/><path d="M1.600 9.100 8.200 8.700 8.100 13.300 1.400 11.600z" fill="#4a9cf0"/><path d="M3.200 10 6.800 9.800" stroke="#e8f2ff" stroke-width=".9"/><circle cx="11.600" cy="11.400" r="4.200" fill="url(#gOk)" stroke="#1e8a18" stroke-width=".6"/><path d="M9.500 11.500 11 13 13.800 9.900" fill="none" stroke="#fff" stroke-width="1.500" stroke-linecap="round" stroke-linejoin="round"/></svg>
<div class="mi" style="top:517px">Pr<u>i</u>nt Order Confirmation</div>
<svg class="abs" style="left:634px;top:544px;z-index:3" width="16" height="16" viewBox="0 0 16 16"><path d="M1.6 4.2 4 1.6 5.600 3zM14.4 4.200 12 1.600 10.400 3z" fill="#d83a1c" stroke="#a8200c" stroke-width=".5"/><circle cx="8" cy="8.6" r="6" fill="#e8401c" stroke="#a8200c" stroke-width=".6"/><circle cx="8" cy="8.600" r="4.400" fill="#cfeaf8" stroke="#f4b8a0" stroke-width=".5"/><path d="M8 5.800v3l2 1.200" fill="none" stroke="#333" stroke-width="1"/><path d="M3.600 13.600 2.600 15.200M12.400 13.600 13.400 15.200" stroke="#a8200c" stroke-width="1.200"/></svg>
<div class="mi" style="top:546px"><u>A</u>dd reminder</div>
<div class="mk" style="left:754px;top:546px">Ctrl+R</div>
<svg class="abs" style="left:634px;top:570px;z-index:3" width="16" height="16" viewBox="0 0 16 16"><path d="M1.500 1.500h4.500l2.500 2.500v6.500h-7z" fill="#e8f0fe" stroke="#5872b0" stroke-width="1"/><path d="M6 1.500v2.500h2.500" fill="none" stroke="#5872b0" stroke-width=".7"/><path d="M6.500 6.500h5l2.500 2.500v5.500h-7.500z" fill="#eef4ff" stroke="#5872b0" stroke-width="1"/><path d="M11.500 6.500v2.500h2.500" fill="#d4e0f8" stroke="#5872b0" stroke-width=".7"/></svg>
<div class="mi" style="top:572px"><u>D</u>uplicate quote</div>
<div class="mk" style="left:754px;top:572px">Ctrl+D</div>
<svg class="abs" style="left:634px;top:599px;z-index:3" width="16" height="16" viewBox="0 0 16 16"><path d="M5.400 1 10.200 2 11.800 7 3.800 6.600z" fill="#fbfdff" stroke="#a8b2c4" stroke-width=".7"/><path d="M6.200 2.400 9.600 3.100 10.500 5.800 5.300 5.500z" fill="#d4e6fa"/><path d="M1 8.200 4.400 6 12.600 6.600 15 9 15 11.800 9 14.900 1 12z" fill="#f4f4f6" stroke="#90929a" stroke-width=".7" stroke-linejoin="round"/><path d="M1 10.600 9 13.200 15 10.400 15 11.800 9 14.900 1 12z" fill="#7c7e84"/><path d="M3 9.800 9 11.800 13.400 9.700" fill="none" stroke="#c4c6cc" stroke-width=".8"/><circle cx="12.600" cy="8.300" r=".9" fill="#38c428"/></svg>
<div class="mi" style="top:601px"><u>P</u>rint list</div>
<div class="mk" style="left:754px;top:601px">Ctrl+P</div>
<div class="msep" style="top:367px"></div>
<div class="msep" style="top:422px"></div>
<div class="msep" style="top:451px"></div>
<div class="msep" style="top:480px"></div>
<div class="msep" style="top:509px"></div>
<div class="msep" style="top:538px"></div>
<div class="msep" style="top:593px"></div>
<svg class="abs" style="left:854px;top:432px" width="4" height="8" viewBox="0 0 4 8"><path d="M0 0 4 4 0 8z" fill="#111"/></svg>
<div class="abs" style="left:615px;top:448px;width:203px;height:35px;border:2px solid #e53a36;filter:drop-shadow(-1px 1.500px 1.500px rgba(0,0,0,.28))"></div>
<svg class="abs" style="left:610px;top:290px;z-index:5" width="50" height="40" viewBox="610 290 50 40"><defs><radialGradient id="gStar" cx="634.5" cy="307.5" r="20" gradientUnits="userSpaceOnUse"><stop offset="0" stop-color="#2a62f2"/><stop offset=".55" stop-color="#3674f6"/><stop offset="1" stop-color="#4c8cfc"/></radialGradient></defs><path d="M633.600 295 636.400 301.200 640.800 297.200 639.800 302.400 653.700 296.300 642.800 304.800 647.300 306.600 642.800 309.400 650.900 313.900 640.800 313.200 637 316.400 633.800 315.400 626 323.600 628.400 313 616.300 311.700 626.800 308.200 624 303.500 628 304.400 621.300 296 631 301.600z" fill="url(#gStar)" opacity=".94"/><path d="M635.600 306.500V320.800L638.700 317.900 641 322.600 643.500 321.400 641.300 316.800 645.400 316.400z" fill="#0a0a0a" stroke="#fff" stroke-width=".9" stroke-linejoin="round"/></svg>
</body>
</html>
